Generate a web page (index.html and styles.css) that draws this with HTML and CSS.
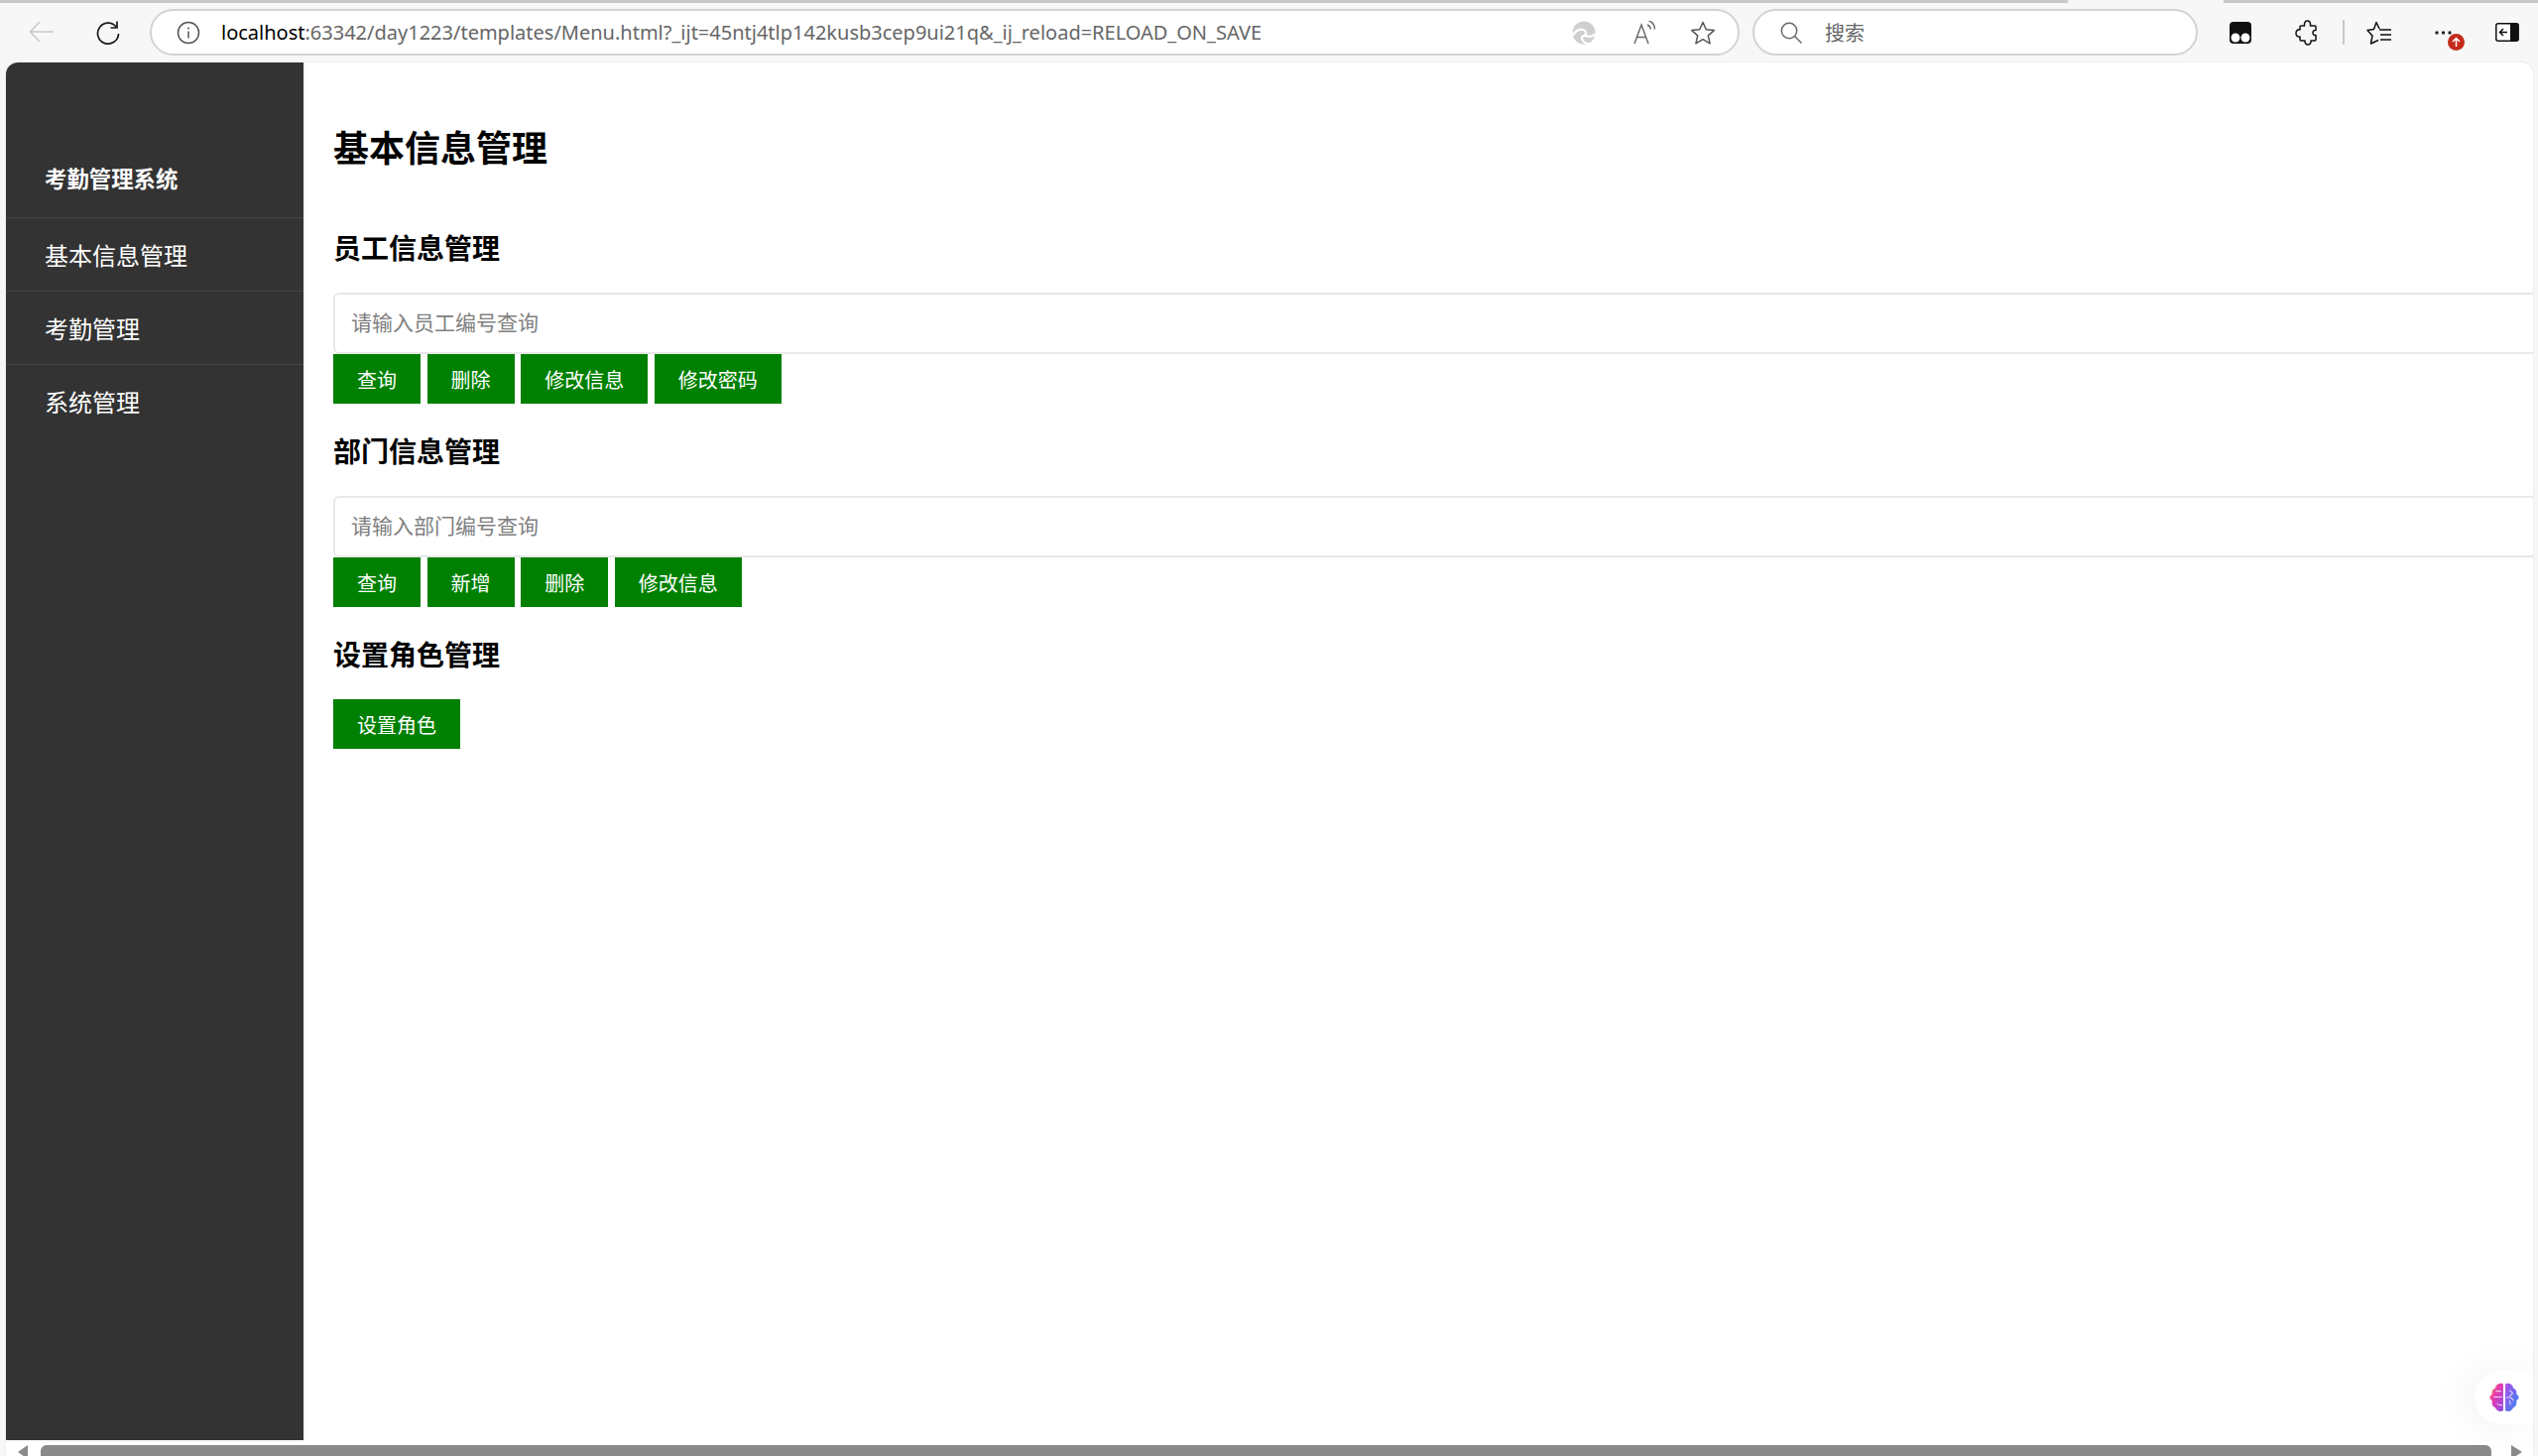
FILE: index.html
```html
<!DOCTYPE html>
<html lang="zh-CN">
<head>
<meta charset="utf-8">
<title>Menu</title>
<link rel="stylesheet" href="styles.css">
</head>
<body>
<div class="tabstrip"><span class="tab-a"></span><span class="tab-b"></span></div>
<header class="toolbar">
  <button class="tool back" aria-label="back">
    <svg width="26" height="24" viewBox="0 0 26 24" fill="none" stroke="#c9c9c9" stroke-width="1.6"><path d="M25 12H2M11 2 1.5 12 11 22"/></svg>
  </button>
  <button class="tool reload" aria-label="reload">
    <svg width="26" height="26" viewBox="0 0 26 26" fill="none" stroke="#1a1a1a" stroke-width="1.7"><path d="M21.5 7.5A10.5 10.5 0 1 0 23.5 14"/><path d="M22 1.5V8h-6.5"/></svg>
  </button>
  <div class="address">
    <svg class="info" width="24" height="24" viewBox="0 0 24 24" fill="none" stroke="#555" stroke-width="1.5"><circle cx="12" cy="12" r="10.5"/><path d="M12 10.5v7M12 6.5v2"/></svg>
    <div class="url"><span class="host">localhost</span>:63342/day1223/templates/Menu.html?_ijt=45ntj4tlp142kusb3cep9ui21q&amp;_ij_reload=RELOAD_ON_SAVE</div>
    <svg class="addr-icon edge" width="24" height="24" viewBox="0 0 24 24"><circle cx="12" cy="12" r="11.500" fill="#cfcfcf"/><path d="M1 15c2-6 9-8 12-5 2 2 1 4-1 5M23 13c-3 5-8 2-11 2-2 0-3 2-1 5 1 2 4 3 6 3" fill="none" stroke="#fff" stroke-width="2.200"/></svg>
    <svg class="addr-icon read" width="24" height="24" viewBox="0 0 24 24" fill="none" stroke="#666" stroke-width="1.4"><path d="M1 23 8 4l7 19M3.500 16.500h9"/><path d="M14 4c2 .7 3 2.500 3.300 4.500M15.500 0c3.500 1 5.800 4.500 6 8.500"/></svg>
    <svg class="addr-icon star" width="26" height="24" viewBox="0 0 26 24" fill="none" stroke="#555" stroke-width="1.5" stroke-linejoin="round"><path d="m13 1.500 3.300 7.300 8 .8-6 5.300 1.800 7.900-7.100-4.100-7.100 4.100 1.800-7.900-6-5.300 8-.8Z"/></svg>
  </div>
  <div class="search">
    <svg width="22" height="22" viewBox="0 0 22 22" fill="none" stroke="#666" stroke-width="1.5"><circle cx="9" cy="9" r="7.700"/><path d="m14.500 14.500 7 7"/></svg>
    <span class="search-text">搜索</span>
  </div>
  <div class="extensions">
    <svg class="ext-mask" width="24" height="24" viewBox="0 0 24 24"><rect x="1" y="1" width="22" height="22" rx="4" fill="#111"/><circle cx="7" cy="17" r="4.500" fill="#fff"/><circle cx="17" cy="17" r="4.500" fill="#fff"/></svg>
    <svg class="ext-puzzle" width="24" height="26" viewBox="0 0 24 26" fill="none" stroke="#111" stroke-width="1.5" stroke-linejoin="round"><path d="M6 6h3.500C9 2 11 1 12.500 1s3.500 1 3 5H20a1 1 0 0 1 1 1v3.500c-2-.5-3 1-3 2.500s1 3 3 2.500V20a1 1 0 0 1-1 1h-4c.5 2-1 4-3 4s-3.500-2-3-4H6a1 1 0 0 1-1-1v-3c-3 .5-4-1.500-4-3.500S2.500 9 5 10V7a1 1 0 0 1 1-1Z"/></svg>
    <span class="ext-sep"></span>
    <svg class="ext-fav" width="26" height="24" viewBox="0 0 26 24" fill="none" stroke="#111" stroke-width="1.5" stroke-linejoin="round"><path d="M13 8 10 1.500 7.500 8.500 1 9.500 6 15l-1.500 8L12 19.500"/><path d="M13 9h12M14 14h11M14 19h11" stroke-width="1.500"/></svg>
    <div class="ext-more">
      <svg width="20" height="6" viewBox="0 0 20 6" fill="#222"><circle cx="3" cy="3" r="1.700"/><circle cx="9.500" cy="3" r="1.700"/><circle cx="16" cy="3" r="1.700"/></svg>
      <svg class="badge" width="17" height="17" viewBox="0 0 17 17"><circle cx="8.500" cy="8.500" r="8.500" fill="#c42b1c"/><path d="M8.500 13V4.500M5 8l3.500-3.500L12 8" fill="none" stroke="#fff" stroke-width="1.500"/></svg>
    </div>
    <svg class="ext-side" width="24" height="19" viewBox="0 0 24 19"><rect x=".8" y=".8" width="22.400" height="17.400" rx="2" fill="#fff" stroke="#111" stroke-width="1.500"/><path d="M15 1h7a1 1 0 0 1 1 1v15a1 1 0 0 1-1 1h-7Z" fill="#111"/><path d="M12 9.500H5M8 6 4.500 9.500 8 13" fill="none" stroke="#111" stroke-width="1.500"/></svg>
  </div>
</header>
<div class="viewport">
  <div class="page">
    <nav class="sidebar">
      <div class="brand">考勤管理系统</div>
      <a class="nav-item">基本信息管理</a>
      <a class="nav-item">考勤管理</a>
      <a class="nav-item">系统管理</a>
    </nav>
    <main class="content">
      <h1 class="page-title">基本信息管理</h1>
      <section class="group">
        <h2 class="group-title">员工信息管理</h2>
        <input class="query" type="text" placeholder="请输入员工编号查询">
        <div class="actions">
          <button class="btn">查询</button>
          <button class="btn">删除</button>
          <button class="btn">修改信息</button>
          <button class="btn">修改密码</button>
        </div>
      </section>
      <section class="group">
        <h2 class="group-title">部门信息管理</h2>
        <input class="query" type="text" placeholder="请输入部门编号查询">
        <div class="actions">
          <button class="btn">查询</button>
          <button class="btn">新增</button>
          <button class="btn">删除</button>
          <button class="btn">修改信息</button>
        </div>
      </section>
      <section class="group">
        <h2 class="group-title">设置角色管理</h2>
        <div class="actions">
          <button class="btn">设置角色</button>
        </div>
      </section>
    </main>
  </div>
  <div class="hscroll">
    <span class="arrow-left"></span>
    <span class="thumb"></span>
    <span class="arrow-right"></span>
  </div>
  <div class="assistant">
    <svg width="32" height="30" viewBox="0 0 30 28" fill="none">
      <defs>
        <linearGradient id="bl" x1="0" y1="0" x2="1" y2="1"><stop offset="0" stop-color="#f9a03f"/><stop offset=".4" stop-color="#e83bb0"/><stop offset="1" stop-color="#8a4be8"/></linearGradient>
        <linearGradient id="br" x1="0" y1="0" x2="1" y2="1"><stop offset="0" stop-color="#b04be8"/><stop offset="1" stop-color="#2f8cf5"/></linearGradient>
      </defs>
      <path d="M14 1C10 0 7 2 6.500 5 3.500 6 3 9 3.500 11 .5 13 .5 15 3.500 17c-.5 3 .5 6 3 6.500C8 27 12 28 14 26.500Z" fill="url(#bl)"/>
      <path d="M16 1c4-1 7 1 7.500 4 3 1 3.500 4 3 6 3 2 3 4 0 6 .5 3-.5 6-3 6.500C22 27 18 28 16 26.500Z" fill="url(#br)"/>
      <path d="M5 13.500h8M7 8h5M8 20c1.500 1 3 1.500 5 1M20 7l3 3-3 3M17 14h4l3 3M21 21l-1-4" stroke="#fff" stroke-width="1" opacity=".75"/>
    </svg>
  </div>
</div>
</body>
</html>
```
FILE: styles.css
```css
* { box-sizing: border-box; }

html, body { margin: 0; height: 100%; }

body {
  display: flex;
  flex-direction: column;
  height: 100vh;
  overflow: hidden;
  background: #f7f7f7;
  font-family: "Noto Sans", "Noto Sans CJK SC", sans-serif;
}

.tabstrip {
  flex: none;
  height: 3px;
  display: flex;
  justify-content: space-between;
}
.tab-a { width: 2085px; background: #c8c8c8; }
.tab-b { width: 317px; background: #c8c8c8; }

.toolbar {
  flex: none;
  height: 60px;
  display: flex;
  align-items: flex-start;
  padding: 6px 0 0 29px;
}

.tool {
  padding: 0;
  border: 0;
  background: none;
  display: flex;
}
.back { margin-top: 11px; width: 26px; }
.reload { margin: 11px 0 0 41px; width: 26px; }

.address {
  margin-left: 29px;
  width: 1603px;
  height: 47px;
  display: flex;
  align-items: center;
  background: #fff;
  border: 2px solid #d3d3d3;
  border-radius: 24px;
  padding-left: 25px;
}
.info { flex: none; }
.url {
  margin-left: 21px;
  flex: 1;
  font-size: 20px;
  color: #666;
  white-space: nowrap;
}
.host { color: #000; }
.addr-icon { flex: none; }
.edge { margin-right: 38px; }
.read { margin-right: 33px; }
.star { margin-right: 22px; }

.search {
  margin-left: 13px;
  width: 449px;
  height: 47px;
  display: flex;
  align-items: center;
  background: #fff;
  border: 2px solid #d3d3d3;
  border-radius: 24px;
  padding-left: 26px;
}
.search-text {
  margin-left: 23px;
  font-size: 20px;
  color: #666;
}

.extensions {
  margin-left: 31px;
  height: 47px;
  display: flex;
  align-items: center;
  position: relative;
}
.ext-puzzle { margin-left: 43px; }
.ext-sep { margin-left: 24px; width: 2px; height: 25px; background: #c9c9c9; }
.ext-fav { margin-left: 22px; }
.ext-more { margin-left: 42px; width: 20px; height: 6px; display: flex; position: relative; }
.badge { position: absolute; left: 14px; top: 4px; }
.ext-side { margin-left: 42px; }

.viewport {
  flex: 1;
  min-height: 0;
  margin: 0 5px 0 6px;
  background: #fff;
  border-radius: 12px 12px 0 0;
  display: flex;
  flex-direction: column;
  overflow: hidden;
  position: relative;
  box-shadow: 0 0 0 1px #eeeeee;
}

.page {
  flex: none;
  height: 1389px;
  display: flex;
}

.sidebar {
  flex: none;
  width: 300px;
  background: #333;
  color: #fff;
  padding-top: 83px;
  box-shadow: 1px 0 4px rgba(0, 0, 0, 0.08);
}
.brand {
  height: 74px;
  padding: 0 0 0 39px;
  font-size: 22.4px;
  font-weight: 700;
  line-height: 69px;
  border-bottom: 1px solid #444;
}
.nav-item {
  display: block;
  height: 74px;
  padding-left: 39px;
  font-size: 24px;
  line-height: 76px;
  border-bottom: 1px solid #444;
}
.nav-item:last-child { border-bottom: 0; }

.content {
  flex: 1;
  min-width: 0;
  overflow: hidden;
  padding: 0 0 0 30px;
}

.page-title {
  margin: 0;
  padding-top: 60px;
  height: 139px;
  font-size: 36px;
  line-height: 54px;
  font-weight: 700;
  color: #000;
}

.group { width: 2400px; }

.group-title {
  margin: 0;
  height: 93px;
  padding-top: 27px;
  font-size: 28px;
  line-height: 42px;
  font-weight: 700;
  color: #000;
}

.query {
  display: block;
  width: 100%;
  height: 62px;
  padding: 0 16px 2px;
  font-family: inherit;
  font-size: 21px;
  background: #fff;
  border: 2px solid #e8e8e8;
  border-radius: 6px;
  outline: 0;
}
.query::placeholder { color: #808080; opacity: 1; }

.actions {
  display: flex;
  gap: 6.600px;
}

.btn {
  height: 50px;
  padding: 1px 24px 0;
  border: 0;
  background: #008000;
  color: #fff;
  font-family: inherit;
  font-size: 20px;
}

.hscroll {
  flex: none;
  height: 11px;
  margin-top: 5px;
  display: flex;
  align-items: flex-start;
  position: relative;
}
.arrow-left {
  margin-left: 12px;
  width: 0;
  height: 0;
  border-style: solid;
  border-width: 7px 10px 7px 0;
  border-color: transparent #8a8a8a transparent transparent;
}
.thumb {
  margin-left: 13px;
  width: 2471px;
  height: 11px;
  background: #8a8a8a;
  border-radius: 6px 6px 0 0;
}
.arrow-right {
  margin-left: 20px;
  width: 0;
  height: 0;
  border-style: solid;
  border-width: 7px 0 7px 11px;
  border-color: transparent transparent transparent #8a8a8a;
}

.assistant {
  position: absolute;
  right: 0;
  bottom: 32px;
  width: 59px;
  height: 54px;
  display: flex;
  align-items: center;
  justify-content: flex-start;
  padding-left: 14px;
  background: #fff;
  border-radius: 27px 0 0 27px;
  box-shadow: -8px 0 40px rgba(0, 0, 0, 0.06);
}
```
